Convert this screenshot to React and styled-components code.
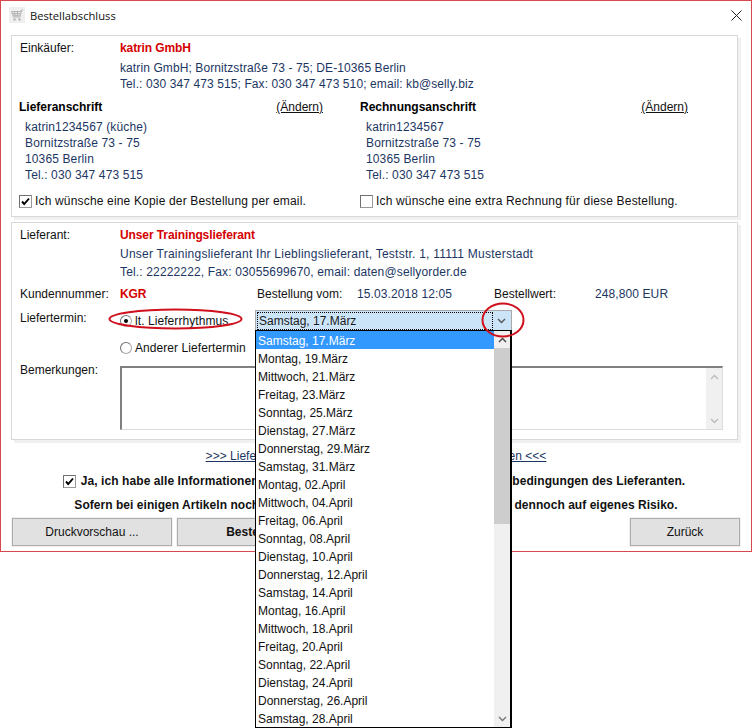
import React from "react";
import styled, { createGlobalStyle } from "styled-components";

const Global = createGlobalStyle`
  html, body { margin: 0; padding: 0; background: #fff; }
  body { width: 752px; height: 728px; overflow: hidden; font-family: "Liberation Sans", Arial, sans-serif; font-size: 12px; color: #000; }
  * { box-sizing: border-box; }
`;

const Window = styled.div`
  position: relative;
  width: 752px;
  height: 552px;
  border: 1px solid #d9484f;
  background: #fff;
`;

const TitleBar = styled.div`
  display: flex;
  align-items: center;
  height: 34px;
  padding: 0 9px 6px 8px;
`;

const AppIcon = styled.div`
  width: 16px;
  height: 16px;
  background: #efefef;
  display: flex;
  align-items: center;
  justify-content: center;
`;

const Title = styled.div`
  margin-left: 5px;
  flex: 1;
  font-family: "Open Sans", sans-serif;
  font-size: 11.2px;
  color: #111;
`;

const Close = styled.div`
  width: 11px;
  height: 11px;
  display: flex;
`;

const Panel = styled.div`
  width: 727px;
  margin-left: 10px;
  margin-top: ${({ $top }) => $top || 0}px;
  height: ${({ $h }) => $h}px;
  border: 1px solid #d8d8d8;
  box-shadow: 3px 3px 0 #f0f0f0;
  padding: 4px 14px 0 8px;
  background: #fff;
`;

const Row = styled.div`
  display: flex;
  height: 16px;
  line-height: 16px;
  margin-top: ${({ $mt }) => $mt || 0}px;
  white-space: nowrap;
`;

const Label = styled.div`
  width: 100px;
  flex: none;
  color: #111;
`;

const Strong = styled.div`
  font-weight: bold;
  color: #d40000;
  letter-spacing: -0.1px;
`;

const Info = styled.div`
  color: #1c3663;
  letter-spacing: ${({ $ls }) => $ls ?? 0.1}px;
`;

const Addresses = styled.div`
  display: grid;
  grid-template-columns: 341px 1fr;
  margin: 7px 0 0 -1px;
`;

const AddressCol = styled.div`
  padding-right: ${({ $pr }) => $pr}px;
`;

const AddressHead = styled.div`
  display: flex;
  justify-content: space-between;
  height: 16px;
  line-height: 16px;
  margin-bottom: 4px;
`;

const HeadTitle = styled.div`
  font-weight: bold;
`;

const Change = styled.div`
  color: #111;
  text-decoration: underline;
`;

const AddressLine = styled.div`
  height: 16px;
  line-height: 16px;
  padding-left: 6px;
  color: #1c3663;
  letter-spacing: 0.13px;
`;

const CheckLine = styled.div`
  display: flex;
  align-items: center;
  gap: 3px;
  height: 16px;
  margin-top: 10px;
  color: #111;
  letter-spacing: 0.17px;
  white-space: nowrap;
`;

const CheckBox = styled.div`
  width: 13px;
  height: 13px;
  flex: none;
  background: #fff;
  border: 1px solid #9a9a9a;
  border-top-color: #707070;
  border-left-color: #707070;
  display: flex;
  align-items: center;
  justify-content: center;
`;

const Radio = styled.div`
  width: 12px;
  height: 12px;
  flex: none;
  border-radius: 50%;
  border: 1px solid #a8a8a8;
  border-top-color: #707070;
  border-left-color: #707070;
  background: #fff;
  display: flex;
  align-items: center;
  justify-content: center;
  &::after {
    content: "";
    display: ${({ $on }) => ($on ? "block" : "none")};
    width: 4px;
    height: 4px;
    border-radius: 50%;
    background: #000;
  }
`;

const OrderCols = styled.div`
  display: flex;
`;

const OrderLabel = styled.div`
  width: ${({ $w }) => $w}px;
  color: #111;
  flex: none;
`;

const TermRow = styled.div`
  display: flex;
  height: 20px;
  margin-top: 8px;
  position: relative;
`;

const RadioLine = styled.div`
  display: flex;
  align-items: center;
  gap: 3px;
  width: 135px;
  height: 22px;
  color: #111;
  flex: none;
  letter-spacing: 0.07px;
`;

const TermLabel = styled.div`
  width: 100px;
  line-height: 16px;
  color: #111;
  flex: none;
`;

const Select = styled.div`
  position: relative;
  width: 257px;
  height: 20px;
  border: 1px solid #a9a9a9;
  border-bottom: none;
  background: #cce4f7;
  display: flex;
  padding: 1px;
`;

const SelectValue = styled.div`
  flex: 1;
  border: 1px dotted #000;
  line-height: 16px;
  height: 18px;
  padding-left: 1px;
  color: #1a1a1a;
`;

const SelectArrow = styled.div`
  width: 17px;
  display: flex;
  align-items: center;
  justify-content: center;
`;

const List = styled.div`
  position: absolute;
  left: -1px;
  top: 19px;
  width: 257px;
  height: 398px;
  background: #fff;
  border: 1px solid #000;
  border-width: 1px 2px 1px 1px;
  display: flex;
  z-index: 5;
`;

const Items = styled.div`
  flex: 1;
`;

const Item = styled.div`
  height: 18px;
  line-height: 20px;
  padding-left: 2px;
  color: ${({ $active }) => ($active ? "#fff" : "#111")};
  background: ${({ $active }) => ($active ? "#3399ff" : "#fff")};
`;

const Scroll = styled.div`
  width: 16px;
  background: #f0f0f0;
  display: flex;
  flex-direction: column;
`;

const ScrollBtn = styled.div`
  height: 17px;
  display: flex;
  align-items: center;
  justify-content: center;
  flex: none;
`;

const Thumb = styled.div`
  height: 176px;
  background: #cdcdcd;
  flex: none;
`;

const Spacer = styled.div`
  flex: 1;
`;

const RemarkRow = styled.div`
  display: flex;
  margin-top: ${({ $mt }) => $mt}px;
`;

const TextBox = styled.div`
  width: 604px;
  height: 64px;
  margin-top: 3px;
  border: 1px solid #dcdcdc;
  border-top: 2px solid #808080;
  border-left: 2px solid #808080;
  display: flex;
  justify-content: flex-end;
`;

const LinkRow = styled.div`
  text-align: center;
  margin-top: 8px;
  height: 16px;
  line-height: 16px;
  white-space: nowrap;
`;

const TermsLink = styled.span`
  color: #1c3663;
  text-decoration: underline;
  letter-spacing: 0.02px;
`;

const Notice = styled.div`
  display: flex;
  justify-content: center;
  align-items: center;
  gap: 5px;
  height: 16px;
  margin-top: ${({ $mt }) => $mt}px;
  padding-right: ${({ $pr }) => $pr || 0}px;
  font-weight: bold;
  color: #111;
  white-space: nowrap;
  letter-spacing: ${({ $ls }) => $ls}px;
`;

const Buttons = styled.div`
  display: flex;
  gap: 5px;
  padding: 0 11px 0 11px;
  margin-top: 5px;
`;

const Button = styled.div`
  width: ${({ $w }) => $w}px;
  height: 28px;
  margin-left: ${({ $auto }) => ($auto ? "auto" : "0")};
  background: #e1e1e1;
  border: 1px solid #adadad;
  outline: 1px solid #f0f0f0;
  text-align: center;
  line-height: 26px;
  color: #111;
  font-weight: ${({ $bold }) => ($bold ? "bold" : "normal")};
`;

const Marks = styled.svg`
  position: absolute;
  left: -1px;
  top: -1px;
  z-index: 6;
  pointer-events: none;
`;

const dates = [
  "Samstag, 17.März", "Montag, 19.März", "Mittwoch, 21.März", "Freitag, 23.März",
  "Sonntag, 25.März", "Dienstag, 27.März", "Donnerstag, 29.März", "Samstag, 31.März",
  "Montag, 02.April", "Mittwoch, 04.April", "Freitag, 06.April", "Sonntag, 08.April",
  "Dienstag, 10.April", "Donnerstag, 12.April", "Samstag, 14.April", "Montag, 16.April",
  "Mittwoch, 18.April", "Freitag, 20.April", "Sonntag, 22.April", "Dienstag, 24.April",
  "Donnerstag, 26.April", "Samstag, 28.April",
];

const address = ["Bornitzstraße 73 - 75", "10365 Berlin", "Tel.: 030 347 473 515"];

const Tick = () => (
  <svg width="9" height="9" viewBox="0 0 9 9">
    <path d="M1 4.5 L3.2 7 L8 1.5" fill="none" stroke="#000" strokeWidth="1.9" />
  </svg>
);

const Chevron = ({ up, color = "#555" }) => (
  <svg width="9" height="6" viewBox="0 0 9 6">
    <path d={up ? "M1 5 L4.5 1.5 L8 5" : "M1 1 L4.5 4.5 L8 1"} fill="none" stroke={color} strokeWidth="1.4" />
  </svg>
);

const Cart = () => (
  <svg width="14" height="14" viewBox="0 0 14 14">
    <path d="M13 2 L11.5 2 L10 9 L3.5 9 L1.5 3.5 L11 3.5 M2.2 5.5 L10.5 5.5 M3 7.3 L10.2 7.3 M4.5 3.5 L5 9 M7.5 3.5 L7.5 9" fill="none" stroke="#b4b4b4" strokeWidth="1" />
    <circle cx="4.5" cy="11.5" r="1.2" fill="#b4b4b4" />
    <circle cx="9.5" cy="11.5" r="1.2" fill="#b4b4b4" />
  </svg>
);

export default function App() {
  return (
    <>
      <Global />
      <Window>
        <TitleBar>
          <AppIcon><Cart /></AppIcon>
          <Title>Bestellabschluss</Title>
          <Close>
            <svg width="11" height="11" viewBox="0 0 11 11">
              <path d="M0.5 0.5 L10.5 10.5 M10.5 0.5 L0.5 10.5" stroke="#222" strokeWidth="1" />
            </svg>
          </Close>
        </TitleBar>

        <Panel $h={182}>
          <Row>
            <Label>Einkäufer:</Label>
            <Strong>katrin GmbH</Strong>
          </Row>
          <Row $mt={4}>
            <Label />
            <Info>katrin GmbH; Bornitzstraße 73 - 75; DE-10365 Berlin</Info>
          </Row>
          <Row>
            <Label />
            <Info>Tel.: 030 347 473 515; Fax: 030 347 473 510; email: kb@selly.biz</Info>
          </Row>
          <Addresses>
            <AddressCol $pr={37}>
              <AddressHead>
                <HeadTitle>Lieferanschrift</HeadTitle>
                <Change>(Ändern)</Change>
              </AddressHead>
              <AddressLine>katrin1234567 (küche)</AddressLine>
              {address.map((a) => <AddressLine key={a}>{a}</AddressLine>)}
              <CheckLine><CheckBox><Tick /></CheckBox>Ich wünsche eine Kopie der Bestellung per email.</CheckLine>
            </AddressCol>
            <AddressCol $pr={35}>
              <AddressHead>
                <HeadTitle>Rechnungsanschrift</HeadTitle>
                <Change>(Ändern)</Change>
              </AddressHead>
              <AddressLine>katrin1234567</AddressLine>
              {address.map((a) => <AddressLine key={a}>{a}</AddressLine>)}
              <CheckLine><CheckBox />Ich wünsche eine extra Rechnung für diese Bestellung.</CheckLine>
            </AddressCol>
          </Addresses>
        </Panel>

        <Panel $top={5} $h={218}>
          <Row>
            <Label>Lieferant:</Label>
            <Strong>Unser Trainingslieferant</Strong>
          </Row>
          <Row $mt={3}>
            <Label />
            <Info $ls={0.24}>Unser Trainingslieferant Ihr Lieblingslieferant, Teststr. 1, 11111 Musterstadt</Info>
          </Row>
          <Row $mt={2}>
            <Label />
            <Info $ls={0.15}>Tel.: 22222222, Fax: 03055699670, email: daten@sellyorder.de</Info>
          </Row>
          <Row $mt={6}>
            <Label>Kundennummer:</Label>
            <OrderCols>
              <OrderLabel $w={137}><Strong>KGR</Strong></OrderLabel>
              <OrderLabel $w={100}>Bestellung vom:</OrderLabel>
              <OrderLabel $w={137}><Info>15.03.2018 12:05</Info></OrderLabel>
              <OrderLabel $w={101}>Bestellwert:</OrderLabel>
              <Info>248,800 EUR</Info>
            </OrderCols>
          </Row>
          <TermRow>
            <TermLabel>Liefertermin:</TermLabel>
            <RadioLine><Radio $on />lt. Lieferrhythmus</RadioLine>
            <Select>
              <SelectValue>Samstag, 17.März</SelectValue>
              <SelectArrow><Chevron /></SelectArrow>
              <List>
                <Items>
                  {dates.map((d, i) => <Item key={d} $active={i === 0}>{d}</Item>)}
                </Items>
                <Scroll>
                  <ScrollBtn><Chevron up color="#444" /></ScrollBtn>
                  <Thumb />
                  <Spacer />
                  <ScrollBtn><Chevron color="#777" /></ScrollBtn>
                </Scroll>
              </List>
            </Select>
          </TermRow>
          <RemarkRow $mt={7}>
            <Label />
            <RadioLine><Radio />Anderer Liefertermin</RadioLine>
          </RemarkRow>
          <RemarkRow $mt={4}>
            <Label>Bemerkungen:</Label>
            <TextBox>
              <Scroll>
                <ScrollBtn><Chevron up color="#bbb" /></ScrollBtn>
                <Spacer />
                <ScrollBtn><Chevron color="#bbb" /></ScrollBtn>
              </Scroll>
            </TextBox>
          </RemarkRow>
        </Panel>

        <LinkRow><TermsLink>&gt;&gt;&gt; Lieferbedingungen und weitere Informationen ansehen &lt;&lt;&lt;</TermsLink></LinkRow>
        <Notice $mt={9} $ls={0.08} $pr={4}>
          <CheckBox><Tick /></CheckBox>
          Ja, ich habe alle Informationen sorgfältig gelesen und akzeptiere die Lieferbedingungen des Lieferanten.
        </Notice>
        <Notice $mt={8} $ls={0.04}>Sofern bei einigen Artikeln noch kein Preis angegeben ist, bestelle ich diese dennoch auf eigenes Risiko.</Notice>
        <Buttons>
          <Button $w={160}>Druckvorschau ...</Button>
          <Button $w={219} $bold>Bestellung absenden</Button>
          <Button $w={110} $auto>Zurück</Button>
        </Buttons>

        <Marks width="752" height="728" viewBox="0 0 752 728">
          <ellipse cx="175.5" cy="319" rx="66" ry="9.5" fill="none" stroke="#d0101c" strokeWidth="2" />
          <ellipse cx="503" cy="320" rx="20.5" ry="16.5" fill="none" stroke="#d0101c" strokeWidth="2" />
        </Marks>
      </Window>
    </>
  );
}
